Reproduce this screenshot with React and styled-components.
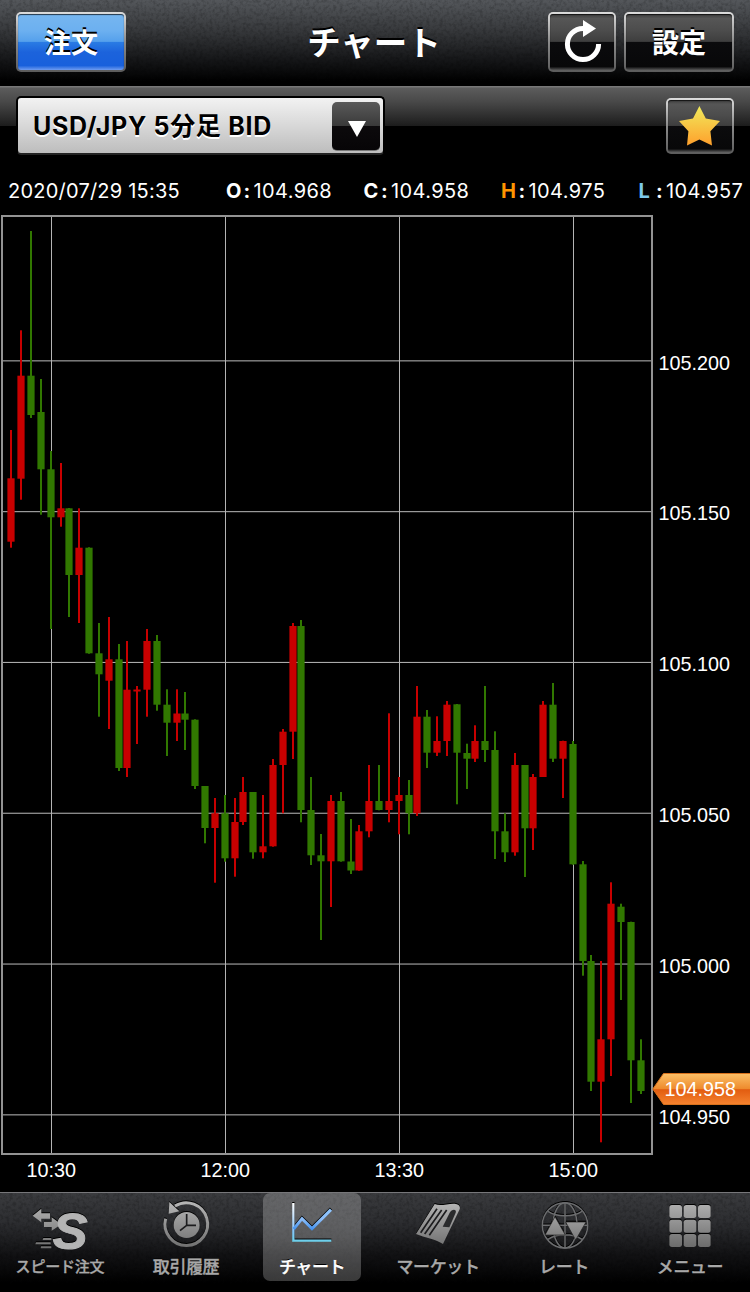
import React from 'react';
import styled, { createGlobalStyle } from 'styled-components';

const GlobalStyle = createGlobalStyle`
  body {
    margin: 0;
    background: #000;
  }
  * {
    box-sizing: border-box;
  }
`;

const Screen = styled.div`
  width: 750px;
  height: 1292px;
  display: flex;
  flex-direction: column;
  overflow: hidden;
  background: #000;
  color: #fff;
  font-family: Inter, 'Noto Sans CJK JP', sans-serif;
`;

const Header = styled.header`
  position: relative;
  height: 86px;
  padding: 12px 16px 0;
  display: grid;
  grid-template-columns: 186px 1fr 186px;
  align-items: start;
  background: linear-gradient(180deg, #54575b 0%, #3a3c3f 32%, #17181a 68%, #000 95%);
`;

const GrainSvg = styled.svg`
  position: absolute;
  left: 0;
  top: 0;
  width: 100%;
  height: 100%;
  opacity: ${props => props.$opacity};
  pointer-events: none;
`;

const Title = styled.h1`
  position: relative;
  margin: 0;
  height: 60px;
  font-family: 'Noto Sans CJK JP', sans-serif;
  font-weight: 700;
  font-size: 33.5px;
  line-height: 58px;
  text-align: center;
  text-shadow: 0 -2px 0 #000;
  white-space: nowrap;
  transform: translateX(-1px);
`;

const HeaderRight = styled.div`
  display: flex;
  gap: 8px;
`;

const Button = styled.button`
  position: relative;
  width: ${props => props.$width}px;
  height: ${props => props.$height || 60}px;
  padding: 0;
  display: flex;
  align-items: center;
  justify-content: center;
  border: 2px solid transparent;
  border-radius: 5px;
  background:
    ${props => (props.$primary
    ? 'linear-gradient(180deg, #76b6f0 0%, #6cb0f0 30%, #55a0ec 49%, #2a7ce4 50%, #1c63dc 68%, #1860dc 92%, #6f9cf0 100%)'
    : 'linear-gradient(180deg, #3c3c3c 0%, #565656 8%, #4c4c4c 30%, #3e3e3e 49%, #0b0b0d 50%, #080809 94%, #555 100%)')} padding-box,
    linear-gradient(180deg, #dcdcdc 0%, #8b8b8b 50%, #5c5c5c 100%) border-box;
  box-shadow: inset 0 1px 1px rgba(0, 0, 0, 0.7);
  color: #fff;
  font-family: 'Noto Sans CJK JP', sans-serif;
  font-weight: 700;
  font-size: 27px;
  line-height: 56px;
  text-shadow: 0 -2px 0 #000;
`;

const SubHeader = styled.div`
  height: 86px;
  padding: 10px 16px 0;
  display: flex;
  justify-content: space-between;
  background: linear-gradient(180deg, #777 0, #777 1px, #5c5c5c 2px, #484848 16px, #1c1c1c 40px, #000 40px);
`;

const Select = styled.div`
  width: 369px;
  height: 59px;
  padding: 4px 3px 2px 15px;
  display: flex;
  justify-content: space-between;
  align-items: center;
  border: 2px solid #000;
  border-bottom-color: #222;
  border-radius: 5px;
  background: linear-gradient(180deg, #f2f2f2 0%, #d8d8d8 50%, #bdbdbd 100%);
  color: #000;
  font-family: Inter, 'Noto Sans CJK JP', sans-serif;
  font-weight: 650;
  font-size: 25px;
  line-height: 47px;
  letter-spacing: 0.7px;
  white-space: nowrap;
  text-shadow: 0 2px 0 #fff;
`;

const SelectArrow = styled.span`
  width: 48px;
  height: 49px;
  display: flex;
  align-items: center;
  justify-content: center;
  border-radius: 5px;
  border-bottom: 1px solid #777;
  background: linear-gradient(180deg, #5a5a5a 0%, #3a3a3a 49%, #0c0a0c 50%, #070507 100%);

  svg {
    position: relative;
    left: 1px;
    top: 3px;
  }
`;

const FavoriteSlot = styled.div`
  padding-top: 2px;
`;

const Quote = styled.div`
  height: 36px;
  padding-left: 8px;
  display: grid;
  grid-template-columns: 218px repeat(4, 137.5px);
  align-items: center;
  font-size: 20px;
  line-height: 38px;
  letter-spacing: 0.4px;
  white-space: nowrap;
`;

const QuoteTime = styled.span`
  letter-spacing: 0.22px;
`;

const QuoteItem = styled.span`
  display: flex;
`;

const QuoteLabel = styled.b`
  width: 17.5px;
  color: ${props => props.$color || '#fff'};
`;

const QuoteColon = styled.b`
  width: 10px;
`;

const ChartSvg = styled.svg`
  display: block;
  flex: none;
  font-family: 'Liberation Sans', Arial, sans-serif;
  font-size: 19.8px;
`;

const TabBar = styled.nav`
  position: relative;
  height: 100px;
  display: grid;
  grid-template-columns: repeat(6, 126px);
  justify-content: center;
  border-top: 1px solid #77777a;
  background: linear-gradient(180deg, #3a3b3e 0%, #2c2d30 30%, #121214 62%, #000 92%);
`;

const Tab = styled.div`
  position: relative;
  width: 98px;
  height: 88px;
  justify-self: center;
  display: flex;
  flex-direction: column;
  align-items: center;
  padding-top: 7px;
  border-radius: 7px;
  background: ${props => (props.$active
    ? 'linear-gradient(180deg, rgba(255,255,255,.22) 0%, rgba(255,255,255,.26) 50%, rgba(255,255,255,.22) 100%)'
    : 'none')};
  color: ${props => (props.$active ? '#fff' : '#a8a8a8')};
`;

const TabLabel = styled.span`
  font-family: 'Noto Sans CJK JP', sans-serif;
  font-weight: 500;
  font-size: ${props => (props.$small ? 15 : 17)}px;
  line-height: 28px;
  letter-spacing: ${props => (props.$small ? -0.2 : -0.4)}px;
  -webkit-text-stroke: 0.35px currentColor;
  text-shadow: 0 -1px 0 #000;
  white-space: nowrap;
`;

const TabIcon = styled.svg`
  display: block;
  flex: none;
  width: 60px;
  height: 52px;
  overflow: visible;
  filter: drop-shadow(0 -1px 0 #000);
`;

const PRICE_LABELS = ['105.200', '105.150', '105.100', '105.050', '105.000', '104.950'];
const TIME_LABELS = [['10:30', 51], ['12:00', 225], ['13:30', 399], ['15:00', 573]];

// [x, up, wick top, wick bottom, body top, body bottom]
const CANDLES = [
  [11, 1, 430, 547.7, 478.3, 541.7],
  [21, 1, 330.3, 499.7, 375.7, 478.7],
  [31, 0, 231, 418, 375.7, 415],
  [41, 0, 379, 514.7, 412, 469.3],
  [51, 0, 451, 629, 469.3, 517.3],
  [61, 1, 463, 526.7, 508.3, 517.3],
  [69, 0, 508, 617, 508.3, 575],
  [79, 1, 508.3, 623, 547.7, 575],
  [89, 0, 547.3, 653.7, 547.7, 653.3],
  [99, 0, 623, 716.7, 653.3, 674.3],
  [109, 1, 617, 729, 659.3, 680.7],
  [119, 0, 644, 771, 659.3, 768],
  [127, 1, 641, 777, 689.7, 768],
  [137, 1, 686, 744, 689.5, 691.5],
  [147, 1, 629, 716.7, 641, 689.7],
  [157, 0, 635, 710.7, 641, 704.7],
  [167, 0, 689.3, 756, 704.7, 722.7],
  [177, 1, 689.3, 741, 713.5, 722.7],
  [185, 0, 692, 750, 713.5, 719.7],
  [195, 0, 719.3, 789, 719.7, 786],
  [205, 0, 786, 843.3, 786, 828],
  [215, 1, 798, 882.7, 813.3, 828],
  [225, 0, 795, 861.7, 813.3, 858.3],
  [235, 1, 798, 876.7, 822, 858.3],
  [243, 1, 777, 825, 792, 822],
  [253, 0, 792, 858.7, 792, 852.3],
  [263, 1, 795, 858.3, 846.3, 852.3],
  [273, 1, 759, 846.7, 765, 846.3],
  [283, 1, 729, 813.3, 731.7, 765],
  [293, 1, 623, 759, 626, 731.7],
  [301, 0, 620, 822.3, 626, 810],
  [311, 0, 777, 865, 810, 855.3],
  [321, 0, 834, 940, 855.3, 861.3],
  [331, 1, 795, 907, 801, 861.3],
  [341, 0, 792, 861.7, 801, 861.3],
  [351, 0, 819, 874, 861.5, 870.5],
  [359, 1, 825, 870.7, 831.3, 870.5],
  [369, 1, 765, 837.3, 801, 831.3],
  [379, 0, 765, 810.3, 801, 810],
  [389, 1, 713.3, 822.3, 801, 810],
  [399, 1, 777, 834.3, 795, 801],
  [409, 0, 780, 834.3, 795, 813.3],
  [417, 1, 686, 816, 716.7, 813.3],
  [427, 0, 710, 768, 716.7, 752.7],
  [437, 1, 716.3, 756, 741, 752.7],
  [447, 1, 701, 756, 704.7, 741],
  [457, 0, 704, 804.3, 704.3, 752.7],
  [467, 0, 743.7, 789, 753, 758.7],
  [475, 1, 725.3, 762, 741, 758.7],
  [485, 0, 686, 762, 741, 750],
  [495, 0, 731.3, 859, 750, 831.3],
  [505, 0, 813.3, 862, 831.3, 852.3],
  [515, 1, 753, 855.7, 765, 852.3],
  [525, 0, 765, 877, 765, 828.3],
  [533, 1, 774, 850, 777, 828.3],
  [543, 1, 701, 777, 704.7, 777],
  [553, 0, 683, 762, 704.7, 758.7],
  [563, 1, 740.7, 798, 741, 758.7],
  [573, 0, 741, 864.7, 744, 864.3],
  [583, 0, 861, 975.7, 864.3, 961],
  [591, 0, 955, 1091, 961, 1081.7],
  [601, 1, 961, 1142.3, 1039.3, 1081.7],
  [611, 1, 882.3, 1076, 903.7, 1039.3],
  [621, 0, 903.7, 1000, 906.7, 922],
  [631, 0, 921.7, 1103, 922, 1060.3],
  [641, 0, 1039.3, 1094, 1060.3, 1091],
];

function Grain({ id, opacity }) {
  return (
    <GrainSvg $opacity={opacity} aria-hidden="true">
      <defs>
        <filter id={id} x="0" y="0" width="100%" height="100%">
          <feTurbulence type="fractalNoise" baseFrequency="0.3" numOctaves="3" seed="4" />
          <feColorMatrix values="0 0 0 0 0  0 0 0 0 0  0 0 0 0 0  2.6 0 0 0 -1.1" />
        </filter>
      </defs>
      <rect width="100%" height="100%" filter={`url(#${id})`} />
    </GrainSvg>
  );
}

function Chart() {
  return (
    <ChartSvg width="750" height="984" viewBox="0 208 750 984">
      <defs>
        <linearGradient id="tag" x1="0" y1="0" x2="0" y2="1">
          <stop offset="0" stopColor="#fbc067" />
          <stop offset=".5" stopColor="#ee8a2c" />
          <stop offset=".52" stopColor="#e25c10" />
          <stop offset="1" stopColor="#f5832f" />
        </linearGradient>
      </defs>
      {PRICE_LABELS.map((label, i) => (
        <g key={label}>
          <rect x="2" y={360.3 + i * 150.8} width="650" height="1.1" fill="#aaa" />
          <text x="658.6" y={Math.floor(370.1 + i * 150.8)} fill="#fff">{label}</text>
        </g>
      ))}
      {TIME_LABELS.map(([label, x]) => (
        <g key={label}>
          <rect x={x} y="216" width="1" height="938" fill="#b4b4b4" />
          <text x={x + 0.3} y="1177" fill="#fff" textAnchor="middle">{label}</text>
        </g>
      ))}
      <rect x="2" y="216" width="650" height="938" fill="none" stroke="#939393" strokeWidth="2" />
      {CANDLES.map(([x, up, high, low, top, bottom]) => (
        <g key={x} fill={up ? '#c80000' : '#317800'}>
          <rect x={x - 1} y={high} width="2" height={low - high} />
          <rect x={x - 3.6} y={top} width="7.2" height={bottom - top} />
        </g>
      ))}
      <path d="M652.8 1089 663.5 1073.5H752V1104.5H663.5Z" fill="url(#tag)" stroke="#d8711c" />
      <text x="664.5" y="1096" fill="#fff">104.958</text>
    </ChartSvg>
  );
}

function SpeedIcon() {
  return (
    <TabIcon viewBox="0 0 180 156" fill="url(#metal)">
      <path d="M8 47 34 26V40H60V56H34V67Z" />
      <path d="M42 65H65V52L94 73 65 92V81H42Z" />
      <path d="M40 114H64V120H38ZM18 127H62V133H16ZM33 139H64V145H32Z" />
      <text
        transform="translate(68 148) scale(1.06 1)"
        fontFamily="'Liberation Sans', Arial, sans-serif"
        fontWeight="700"
        fontStyle="italic"
        fontSize="148"
        stroke="url(#metal)"
        strokeWidth="3"
      >
        S
      </text>
    </TabIcon>
  );
}

function HistoryIcon() {
  return (
    <TabIcon viewBox="0 0 180 156" fill="url(#metal)">
      <path d="M57 18A64 64 0 1 1 29 56" fill="none" stroke="url(#metal)" strokeWidth="9" />
      <path d="M40 6 38 41 70 34Z" />
      <circle cx="92" cy="75" r="39" />
      <path d="M92 42V76L72 92M92 76H120" fill="none" stroke="#1c1c1e" strokeWidth="5" />
    </TabIcon>
  );
}

function ChartIcon() {
  return (
    <TabIcon viewBox="0 0 180 156" fill="none">
      <path d="M34 9V122H148" stroke="url(#axis)" strokeWidth="7" />
      <path d="M35 87 60 56 90 86 147 29" stroke="url(#trend)" strokeWidth="9" />
    </TabIcon>
  );
}

function MarketIcon() {
  return (
    <TabIcon viewBox="0 0 180 156">
      <path d="M80 12C98 20 118 10 140 11 152 12 158 19 155 28L105 132C80 116 52 114 24 102Z" fill="url(#metal)" />
      <path d="M87 26 38 98M101 30 50 102M116 30 64 106" stroke="#1d1d1f" strokeWidth="5" fill="none" />
      <path d="M104 80 125 38C131 26 147 26 143 38L124 82Z" fill="#2a2b2d" />
    </TabIcon>
  );
}

function RateIcon() {
  return (
    <TabIcon viewBox="0 0 180 156">
      <g fill="none" stroke="#6c6d6f" strokeWidth="4.5">
        <circle cx="93" cy="76" r="68" />
        <ellipse cx="93" cy="76" rx="36" ry="68" />
        <path d="M93 8V144M25 76H161M42 34C70 52 116 52 144 34M42 118C70 100 116 100 144 118" />
      </g>
      <path d="M63 50 33 105H94ZM95 66H156L125 120Z" fill="url(#metal)" stroke="#222" strokeWidth="2" />
    </TabIcon>
  );
}

function MenuIcon() {
  return (
    <TabIcon viewBox="0 0 180 156" fill="url(#metal-grid)">
      {[15, 59, 102].map(y => [28, 71, 114].map(x => (
        <rect key={`${x}-${y}`} x={x} y={y} width="38" height="39" rx="8" />
      )))}
    </TabIcon>
  );
}

function IconGradients() {
  return (
    <GrainSvg $opacity={1} aria-hidden="true">
      <defs>
        <linearGradient id="metal" gradientUnits="userSpaceOnUse" x1="0" y1="10" x2="0" y2="150">
          <stop offset="0" stopColor="#b4b4b4" />
          <stop offset="1" stopColor="#6c6c6c" />
        </linearGradient>
        <linearGradient id="metal-grid" gradientUnits="userSpaceOnUse" x1="0" y1="10" x2="0" y2="145">
          <stop offset="0" stopColor="#b0b0b0" />
          <stop offset="1" stopColor="#6a6a6a" />
        </linearGradient>
        <linearGradient id="axis" gradientUnits="userSpaceOnUse" x1="0" y1="10" x2="0" y2="124">
          <stop offset="0" stopColor="#fff" />
          <stop offset=".7" stopColor="#8cc4f8" />
          <stop offset="1" stopColor="#6cd0ea" />
        </linearGradient>
        <linearGradient id="trend" gradientUnits="userSpaceOnUse" x1="0" y1="28" x2="0" y2="90">
          <stop offset="0" stopColor="#8fc6ff" />
          <stop offset=".5" stopColor="#8abcf8" />
          <stop offset="1" stopColor="#3f8fee" />
        </linearGradient>
      </defs>
    </GrainSvg>
  );
}

const TABS = [
  { label: 'スピード注文', Icon: SpeedIcon, small: true },
  { label: '取引履歴', Icon: HistoryIcon },
  { label: 'チャート', Icon: ChartIcon, active: true },
  { label: 'マーケット', Icon: MarketIcon },
  { label: 'レート', Icon: RateIcon },
  { label: 'メニュー', Icon: MenuIcon },
];

const QUOTES = [
  { label: 'O', value: '104.968' },
  { label: 'C', value: '104.958' },
  { label: 'H', value: '104.975', color: '#ff9500' },
  { label: 'L', value: '104.957', color: '#7cc8ea' },
];

function App() {
  return (
    <Screen>
      <GlobalStyle />
      <Header>
        <Grain id="header-grain" opacity={0.18} />
        <Button $primary $width={110}>注文</Button>
        <Title>チャート</Title>
        <HeaderRight>
          <Button $width={68} aria-label="更新">
            <svg width="40" height="44" viewBox="0 0 40 44">
              <path d="M36.6 24A15.6 15.6 0 1 1 21 8.4" fill="none" stroke="#fff" strokeWidth="5" />
              <path d="M21 0 34 8.5 21 17Z" fill="#fff" />
            </svg>
          </Button>
          <Button $width={110}>設定</Button>
        </HeaderRight>
      </Header>
      <SubHeader>
        <Select>
          USD/JPY 5分足 BID
          <SelectArrow>
            <svg width="18" height="16" viewBox="0 0 18 16">
              <path d="M0 0H18L9 16Z" fill="#fff" />
            </svg>
          </SelectArrow>
        </Select>
        <FavoriteSlot>
          <Button $width={68} $height={56} aria-label="お気に入り">
            <svg width="42" height="40" viewBox="0 0 42 40">
              <defs>
                <linearGradient id="star" x1="0" y1="0" x2="0" y2="1">
                  <stop offset="0" stopColor="#f0ea5c" />
                  <stop offset="1" stopColor="#ffa02c" />
                </linearGradient>
              </defs>
              <path d="M20.4 0 26.8 12.4 41 15 31.4 25.2 33 39.4 20.4 33.4 8 39.4 9.4 25.2 0 15 14 12.4Z" fill="url(#star)" />
            </svg>
          </Button>
        </FavoriteSlot>
      </SubHeader>
      <Quote>
        <QuoteTime>2020/07/29 15:35</QuoteTime>
        {QUOTES.map(({ label, value, color }) => (
          <QuoteItem key={label}>
            <QuoteLabel $color={color}>{label}</QuoteLabel>
            <QuoteColon>:</QuoteColon>
            {value}
          </QuoteItem>
        ))}
      </Quote>
      <Chart />
      <TabBar>
        <Grain id="tab-grain" opacity={0.2} />
        <IconGradients />
        {TABS.map(({ label, Icon, active, small }) => (
          <Tab key={label} $active={active}>
            <Icon />
            <TabLabel $small={small}>{label}</TabLabel>
          </Tab>
        ))}
      </TabBar>
    </Screen>
  );
}

export default App;
